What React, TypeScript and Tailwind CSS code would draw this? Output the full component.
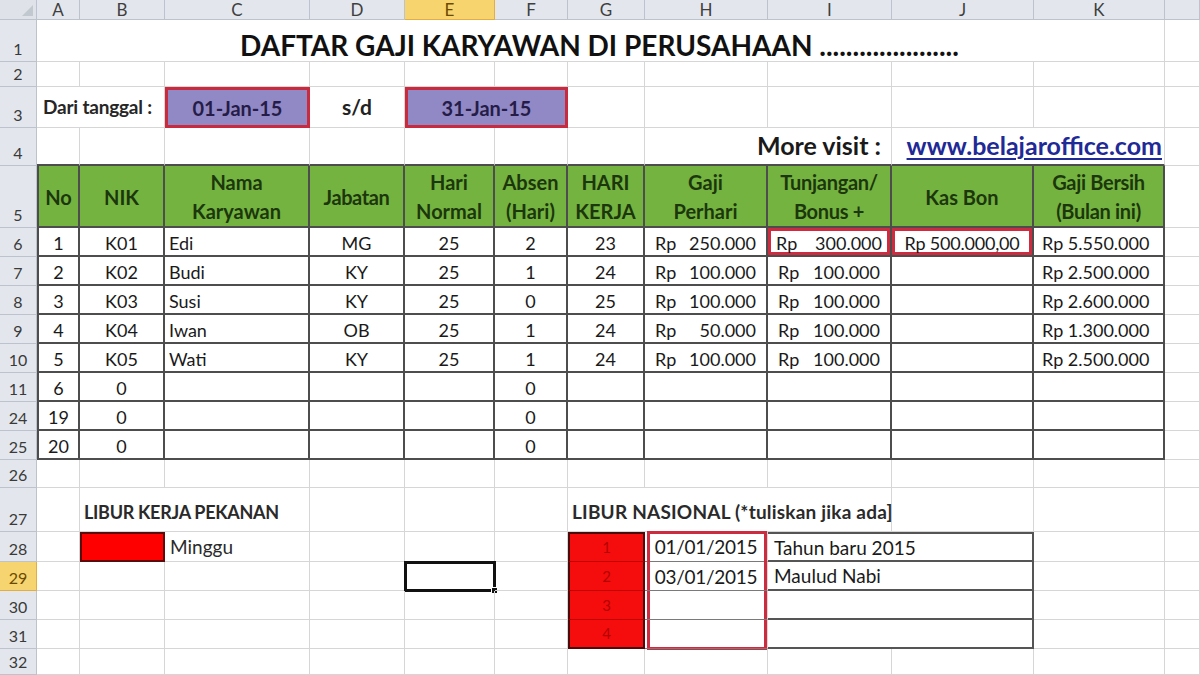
import { twMerge } from 'tailwind-merge';
import type { ReactNode } from 'react';

// column widths (row header first, then A..K, then the sliver of L)
const W = {
  rh: 'w-[37px]',
  A: 'w-[43px]',
  B: 'w-[85px]',
  C: 'w-[145px]',
  D: 'w-[95px]',
  E: 'w-[90px]',
  F: 'w-[73px]',
  G: 'w-[77px]',
  H: 'w-[123px]',
  I: 'w-[124px]',
  J: 'w-[142px]',
  K: 'w-[131px]',
  L: 'w-[35px]',
};

const Cell = ({ w, className = '', children }: { w: string; className?: string; children?: ReactNode }) => (
  <div
    className={twMerge(
      'relative h-full shrink-0 flex items-end px-[4px] pb-[3px] border-r border-b border-[#d6d6d6] text-[18px] leading-none text-[#1a1a1a] whitespace-nowrap',
      w,
      className
    )}
  >
    {children}
  </div>
);

const RowHead = ({ label, active = false }: { label: string; active?: boolean }) => (
  <div
    className={`w-[37px] h-full shrink-0 flex items-end justify-center pb-[4px] border-r border-b text-[16px] leading-none ${
      active ? 'bg-[#f6d46f] border-[#e2ad43] text-[#6b4a00]' : 'bg-[#e3e7ed] border-[#bcc3cc] text-[#3a3a3a]'
    }`}
  >
    {label}
  </div>
);

const T = 'border-r-2 border-b-2 border-[#4d4d4d] items-center pb-0 pt-[2px]';
const G = 'bg-[#74b33f] justify-center items-center text-center font-bold text-[20px] text-[#1c370d] leading-[29px]';
const RED = 'border-[3px] border-[#cc2b40]';

const data = [
  { r: '6', no: '1', nik: 'K01', nama: 'Edi', jab: 'MG', hn: '25', ab: '2', hk: '23', gp: '250.000', tj: '300.000', kb: 'Rp 500.000,00', gb: 'Rp 5.550.000' },
  { r: '7', no: '2', nik: 'K02', nama: 'Budi', jab: 'KY', hn: '25', ab: '1', hk: '24', gp: '100.000', tj: '100.000', kb: '', gb: 'Rp 2.500.000' },
  { r: '8', no: '3', nik: 'K03', nama: 'Susi', jab: 'KY', hn: '25', ab: '0', hk: '25', gp: '100.000', tj: '100.000', kb: '', gb: 'Rp 2.600.000' },
  { r: '9', no: '4', nik: 'K04', nama: 'Iwan', jab: 'OB', hn: '25', ab: '1', hk: '24', gp: '50.000', tj: '100.000', kb: '', gb: 'Rp 1.300.000' },
  { r: '10', no: '5', nik: 'K05', nama: 'Wati', jab: 'KY', hn: '25', ab: '1', hk: '24', gp: '100.000', tj: '100.000', kb: '', gb: 'Rp 2.500.000' },
  { r: '11', no: '6', nik: '0', nama: '', jab: '', hn: '', ab: '0', hk: '', gp: '', tj: '', kb: '', gb: '' },
  { r: '24', no: '19', nik: '0', nama: '', jab: '', hn: '', ab: '0', hk: '', gp: '', tj: '', kb: '', gb: '' },
  { r: '25', no: '20', nik: '0', nama: '', jab: '', hn: '', ab: '0', hk: '', gp: '', tj: '', kb: '', gb: '' },
];

const Money = ({ v }: { v: string }) =>
  v ? (
    <span className="flex w-full justify-between px-[6px]">
      <span>Rp</span>
      <span>{v}</span>
    </span>
  ) : null;

const Plain = ({ w }: { w: string }) => <Cell w={w} />;

export default function App() {
  const letters: [string, string][] = [
    ['A', W.A], ['B', W.B], ['C', W.C], ['D', W.D], ['E', W.E], ['F', W.F],
    ['G', W.G], ['H', W.H], ['I', W.I], ['J', W.J], ['K', W.K], ['', W.L],
  ];

  return (
    <div className="w-[1200px] h-[675px] overflow-hidden bg-white font-['Lato',sans-serif] select-none">
      {/* column letters */}
      <div className="flex h-[20px]">
        <div className="relative w-[37px] h-full shrink-0 bg-[#dfe3e9] border-r border-b border-[#bcc3cc]">
          <div className="absolute right-[3px] bottom-[3px] w-0 h-0 border-l-[11px] border-l-transparent [border-bottom:11px_solid_#c2c8d0]" />
        </div>
        {letters.map(([l, w], i) => (
          <div
            key={i}
            className={twMerge(
              'h-full shrink-0 flex items-center justify-center pt-[1px] border-r border-b border-[#bcc3cc] bg-[#e3e7ed] text-[17px] text-[#3f3f3f]',
              w,
              l === 'E' && 'bg-[#f7d46e] border-[#e2ad43] text-[#6b4a00]'
            )}
          >
            {l}
          </div>
        ))}
      </div>

      {/* row 1 */}
      <div className="flex h-[42px]">
        <RowHead label="1" />
        <Cell w="w-[1128px]" className="justify-center items-center pb-0 pt-[8px] pr-[6px] text-[28px] font-bold text-[#111]">
          DAFTAR GAJI KARYAWAN DI PERUSAHAAN .....................
        </Cell>
        <Plain w={W.L} />
      </div>

      {/* row 2 */}
      <div className="flex h-[25px]">
        <RowHead label="2" />
        <Plain w={W.A} />
        <Plain w={W.B} />
        <Plain w={W.C} />
        <Plain w={W.D} />
        <Plain w={W.E} />
        <Plain w={W.F} />
        <Plain w={W.G} />
        <Plain w={W.H} />
        <Plain w={W.I} />
        <Plain w={W.J} />
        <Plain w={W.K} />
        <Plain w={W.L} />
      </div>

      {/* row 3 */}
      <div className="flex h-[41px]">
        <RowHead label="3" />
        <Cell w="w-[128px]" className="items-center pb-0 pl-[6px] text-[19px] font-bold text-[#262626] tracking-[-0.2px]">
          Dari tanggal :
        </Cell>
        <Cell w={W.C} className="items-center justify-center pb-0 bg-[#9189c5] border-[3px] border-[#c92a3e] text-[20px] font-bold text-[#261c48]">
          01-Jan-15
        </Cell>
        <Cell w={W.D} className="items-center justify-center pb-0 text-[21px] font-bold text-[#222]">
          s/d
        </Cell>
        <Cell w="w-[163px]" className="items-center justify-center pb-0 bg-[#9189c5] border-[3px] border-[#c92a3e] text-[20px] font-bold text-[#261c48]">
          31-Jan-15
        </Cell>
        <Plain w={W.G} />
        <Plain w={W.H} />
        <Plain w={W.I} />
        <Plain w={W.J} />
        <Plain w={W.K} />
        <Plain w={W.L} />
      </div>

      {/* row 4 */}
      <div className="flex h-[38px]">
        <RowHead label="4" />
        <Cell w={W.A} className="border-b-2 border-b-[#4d4d4d]" />
        <Cell w={W.B} className="border-b-2 border-b-[#4d4d4d]" />
        <Cell w={W.C} className="border-b-2 border-b-[#4d4d4d]" />
        <Cell w={W.D} className="border-b-2 border-b-[#4d4d4d]" />
        <Cell w={W.E} className="border-b-2 border-b-[#4d4d4d]" />
        <Cell w={W.F} className="border-b-2 border-b-[#4d4d4d]" />
        <Cell w={W.G} className="border-b-2 border-b-[#4d4d4d]" />
        <Cell w="w-[247px]" className="justify-end items-center pb-0 pr-[10px] border-b-2 border-b-[#4d4d4d] text-[25px] font-bold text-[#1a1a1a]">
          More visit :
        </Cell>
        <Cell w="w-[273px]" className="justify-end items-center pb-0 pr-[2px] border-b-2 border-b-[#4d4d4d] text-[25px] font-bold text-[#1f2a96] underline decoration-[2px] underline-offset-[3px]">
          www.belajaroffice.com
        </Cell>
        <Plain w={W.L} />
      </div>

      {/* row 5 - green header */}
      <div className="flex h-[62px]">
        <RowHead label="5" />
        <Cell w={W.A} className={twMerge(T, G, 'border-l-2')}>No</Cell>
        <Cell w={W.B} className={twMerge(T, G)}>NIK</Cell>
        <Cell w={W.C} className={twMerge(T, G)}>Nama<br />Karyawan</Cell>
        <Cell w={W.D} className={twMerge(T, G, 'tracking-[-0.4px]')}>Jabatan</Cell>
        <Cell w={W.E} className={twMerge(T, G)}>Hari<br />Normal</Cell>
        <Cell w={W.F} className={twMerge(T, G)}>Absen<br />(Hari)</Cell>
        <Cell w={W.G} className={twMerge(T, G)}>HARI<br />KERJA</Cell>
        <Cell w={W.H} className={twMerge(T, G)}>Gaji<br />Perhari</Cell>
        <Cell w={W.I} className={twMerge(T, G, 'tracking-[-0.3px]')}>Tunjangan/<br />Bonus +</Cell>
        <Cell w={W.J} className={twMerge(T, G)}>Kas Bon</Cell>
        <Cell w={W.K} className={twMerge(T, G, 'tracking-[-0.3px]')}>Gaji Bersih<br />(Bulan ini)</Cell>
        <Plain w={W.L} />
      </div>

      {/* rows 6-25 */}
      {data.map((d, i) => (
        <div key={d.r} className="flex h-[29px]">
          <RowHead label={d.r} />
          <Cell w={W.A} className={twMerge(T, 'border-l-2 justify-center')}>{d.no}</Cell>
          <Cell w={W.B} className={twMerge(T, 'justify-center')}>{d.nik}</Cell>
          <Cell w={W.C} className={T}>{d.nama}</Cell>
          <Cell w={W.D} className={twMerge(T, 'justify-center')}>{d.jab}</Cell>
          <Cell w={W.E} className={twMerge(T, 'justify-center')}>{d.hn}</Cell>
          <Cell w={W.F} className={twMerge(T, 'justify-center')}>{d.ab}</Cell>
          <Cell w={W.G} className={twMerge(T, 'justify-center')}>{d.hk}</Cell>
          <Cell w={W.H} className={T}><Money v={d.gp} /></Cell>
          <Cell w={W.I} className={twMerge(T, i === 0 && 'p-0')}>
            {i === 0 ? (
              <div className={`w-full h-full flex items-center pt-[2px] ${RED}`}>
                <span className="flex w-full justify-between px-[5px]">
                  <span>Rp</span>
                  <span>{d.tj}</span>
                </span>
              </div>
            ) : (
              <Money v={d.tj} />
            )}
          </Cell>
          <Cell w={W.J} className={twMerge(T, i === 0 && 'p-0')}>
            {i === 0 ? (
              <div className={`w-full h-full flex items-center justify-center pt-[2px] tracking-[-0.2px] ${RED}`}>{d.kb}</div>
            ) : null}
          </Cell>
          <Cell w={W.K} className={twMerge(T, 'pl-[8px]')}>{d.gb}</Cell>
          <Plain w={W.L} />
        </div>
      ))}

      {/* row 26 */}
      <div className="flex h-[28px]">
        <RowHead label="26" />
        <Plain w={W.A} />
        <Plain w={W.B} />
        <Plain w={W.C} />
        <Plain w={W.D} />
        <Plain w={W.E} />
        <Plain w={W.F} />
        <Plain w={W.G} />
        <Plain w={W.H} />
        <Plain w={W.I} />
        <Plain w={W.J} />
        <Plain w={W.K} />
        <Plain w={W.L} />
      </div>

      {/* row 27 */}
      <div className="flex h-[44px]">
        <RowHead label="27" />
        <Plain w={W.A} />
        <Cell w="w-[230px]" className="pb-[5px] text-[18px] font-bold text-[#2a2a2a] tracking-[-0.3px]">
          LIBUR KERJA PEKANAN
        </Cell>
        <Plain w={W.D} />
        <Plain w={W.E} />
        <Plain w={W.F} />
        <Cell w="w-[324px]" className="pb-[5px] text-[19px] font-bold text-[#2a2a2a] tracking-[0.2px]">
          LIBUR NASIONAL (*tuliskan jika ada]
        </Cell>
        <Plain w={W.J} />
        <Plain w={W.K} />
        <Plain w={W.L} />
      </div>

      {/* rows 28-31 */}
      {[
        { r: '28', n: '1', date: '01/01/2015', ket: 'Tahun baru 2015' },
        { r: '29', n: '2', date: '03/01/2015', ket: 'Maulud Nabi' },
        { r: '30', n: '3', date: '', ket: '' },
        { r: '31', n: '4', date: '', ket: '' },
      ].map((h, i) => (
        <div key={h.r} className={`flex ${i === 0 ? 'h-[30px]' : 'h-[29px]'}`}>
          <RowHead label={h.r} active={h.r === '29'} />
          <Plain w={W.A} />
          <Cell w={W.B} className={i === 0 ? 'bg-[#ff0000] border-2 border-[#5c0a0a]' : ''} />
          <Cell w={W.C} className="pl-[5px] items-center pb-0 pt-[2px] text-[19px] text-[#2a2a2a]">{i === 0 ? 'Minggu' : ''}</Cell>
          <Plain w={W.D} />
          <Cell w={W.E} className="overflow-visible">
            {i === 1 && (
              <div className="absolute -left-[1px] -top-[1px] w-[92px] h-[31px] border-[3px] border-[#111]">
                <div className="absolute -right-[5px] -bottom-[5px] w-[7px] h-[7px] bg-[#111] border border-white" />
              </div>
            )}
          </Cell>
          <Plain w={W.F} />
          <Cell
            w={W.G}
            className={twMerge(
              'bg-[#f50d0d] justify-center items-center pb-0 text-[15px] text-[#b30000] border-r-2 border-l-2 border-b border-[#4a0a0a] border-b-[#c00000]',
              i === 0 && 'border-t-2 border-t-[#4a0a0a]',
              i === 3 && 'border-b-2 border-b-[#4a0a0a]'
            )}
          >
            {h.n}
          </Cell>
          <Cell w={W.H} className="justify-center items-center pb-0 pt-[2px] border-b-[#7a7a7a] text-[19px] text-[#1a1a1a] tracking-[-0.3px]">
            {h.date}
            {i === 0 && <div className="absolute left-[2px] -top-[1px] w-[120px] h-[119px] border-[3px] border-[#cc2b40]" />}
          </Cell>
          <Cell
            w="w-[266px]"
            className={twMerge(
              'pl-[6px] items-center pb-0 pt-[2px] border-r-2 border-b-2 border-[#555] text-[19px] text-[#1a1a1a]',
              i === 0 && 'border-t-2'
            )}
          >
            {h.ket}
          </Cell>
          <Plain w={W.K} />
          <Plain w={W.L} />
        </div>
      ))}

      {/* row 32 */}
      <div className="flex h-[26px]">
        <RowHead label="32" />
        <Plain w={W.A} />
        <Plain w={W.B} />
        <Plain w={W.C} />
        <Plain w={W.D} />
        <Plain w={W.E} />
        <Plain w={W.F} />
        <Plain w={W.G} />
        <Plain w={W.H} />
        <Plain w={W.I} />
        <Plain w={W.J} />
        <Plain w={W.K} />
        <Plain w={W.L} />
      </div>
    </div>
  );
}
